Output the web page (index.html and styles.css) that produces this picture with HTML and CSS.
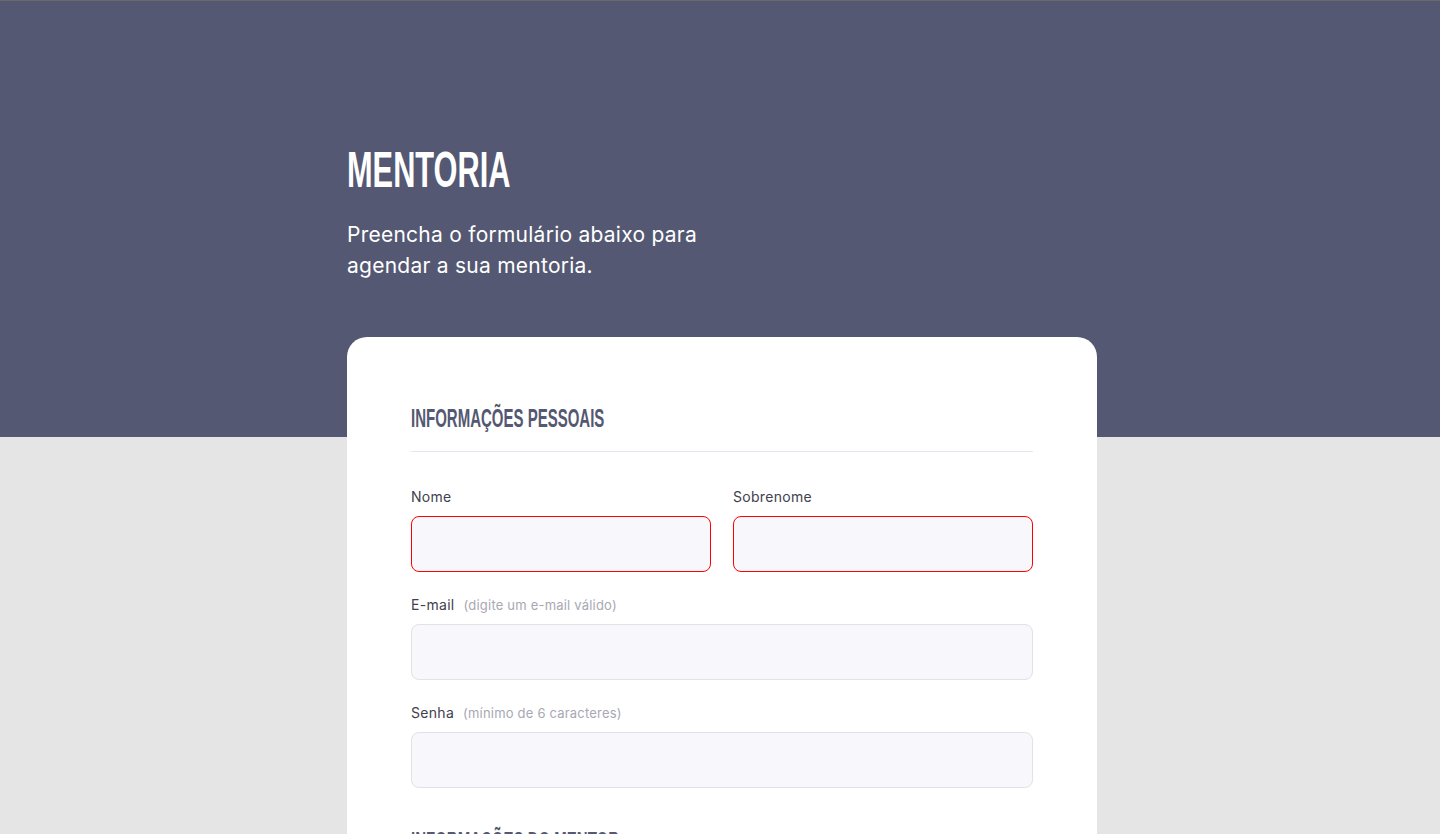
FILE: index.html
```html
<!DOCTYPE html>
<html lang="pt-BR">
<head>
<meta charset="utf-8">
<title>Mentoria</title>
<link rel="stylesheet" href="styles.css">
</head>
<body>
<header class="hero">
  <div class="container">
    <h1 class="hero-title"><span class="condensed">MENTORIA</span></h1>
    <p class="hero-text">Preencha o formulário abaixo para agendar a sua mentoria.</p>
  </div>
</header>
<main class="container">
  <form class="card">
    <section class="section">
      <h2 class="section-title"><span class="condensed">INFORMAÇÕES PESSOAIS</span></h2>
      <div class="row">
        <div class="field">
          <label class="label" for="nome">Nome</label>
          <input class="input input-error" id="nome" type="text">
        </div>
        <div class="field">
          <label class="label" for="sobrenome">Sobrenome</label>
          <input class="input input-error" id="sobrenome" type="text">
        </div>
      </div>
      <div class="field">
        <label class="label" for="email">E-mail <span class="hint">(digite um e-mail válido)</span></label>
        <input class="input" id="email" type="email">
      </div>
      <div class="field">
        <label class="label" for="senha">Senha <span class="hint">(mínimo de 6 caracteres)</span></label>
        <input class="input" id="senha" type="password">
      </div>
    </section>
    <section class="section section-next">
      <h2 class="section-title"><span class="condensed">INFORMAÇÕES DO MENTOR</span></h2>
    </section>
  </form>
</main>
</body>
</html>
```
FILE: styles.css
```css
* { box-sizing: border-box; }
html, body { margin: 0; padding: 0; }
body {
  background: #e5e5e5;
  font-family: "Inter", "Lato", sans-serif;
  color: #41414d;
}
.container {
  width: 754px;
  padding-left: 4px;
  margin: 0 auto;
}
.hero {
  background: #545872;
  border-top: 1px solid #6a6a6a;
  padding-top: 143px;
  padding-bottom: 156px;
}
.condensed {
  display: inline-block;
  font-family: "Liberation Sans Narrow", "Liberation Sans", sans-serif;
  font-weight: 700;
  transform: scaleX(0.615);
  transform-origin: left center;
  white-space: nowrap;
}
.hero-title {
  margin: 0;
  color: #ffffff;
  font-size: 50px;
  line-height: 50px;
}
.hero-text {
  margin: 24px 0 0;
  color: #ffffff;
  font-size: 21px;
  letter-spacing: 0.25px;
  line-height: 31px;
  width: 380px;
}
.card {
  background: #ffffff;
  border-radius: 20px;
  margin-top: -100px;
  padding: 65px 64px 40px;
  width: 750px;
}
.section-title {
  margin: 0 0 34px;
  color: #545872;
  font-size: 25px;
  line-height: 32px;
  padding-bottom: 17px;
  border-bottom: 1px solid #e6e6f0;
}
.section-title .condensed { transform: scaleX(0.6); }
.section-next { margin-top: 37px; }
.row {
  display: grid;
  grid-template-columns: 1fr 1fr;
  gap: 22px;
}
.field {
  display: flex;
  flex-direction: column;
  gap: 8px;
  margin-bottom: 22px;
}
.label {
  display: flex;
  align-items: baseline;
  font-size: 14px;
  line-height: 22px;
  height: 22px;
  letter-spacing: 0.3px;
  color: #41414d;
}
.hint {
  font-size: 13px;
  line-height: 1;
  letter-spacing: 0.2px;
  color: #a8a8b3;
  margin-left: 9px;
}
.input {
  height: 56px;
  width: 100%;
  border: 1px solid #e1e1e6;
  border-radius: 8px;
  background: #f8f8fc;
  font: inherit;
  padding: 0 16px;
  outline: none;
}
.input-error { border-color: #ff0000; }
```
